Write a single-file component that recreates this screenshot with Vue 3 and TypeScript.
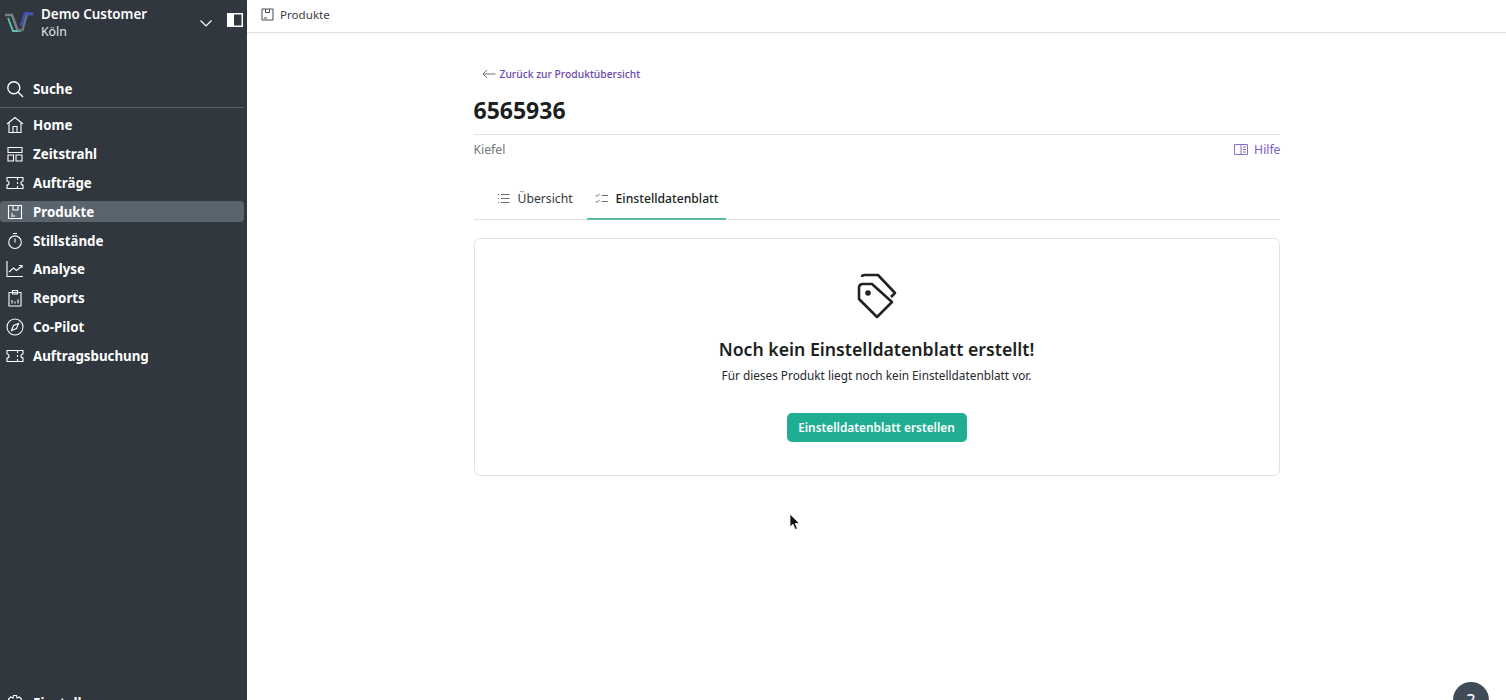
<template>
  <div class="app">
    <aside class="sidebar">
      <div class="brand">
        <svg class="logo" width="30" height="24" viewBox="0 0 30 24" fill="none" stroke-width="2.4">
          <path d="M1 4H8L13.5 19" stroke="#7b8287" />
          <path d="M4 7L9 20H17" stroke="#5fc4b4" stroke-width="1.8" />
          <path d="M13.5 19H18.5L23 3H29" stroke="#6b7278" />
          <path d="M17 15L21 2.5H29.5" stroke="#3f51c4" />
        </svg>
        <div class="brand-text">
          <div class="customer">Demo Customer</div>
          <div class="site">Köln</div>
        </div>
        <svg class="chevron" width="14" height="14" viewBox="0 0 14 14" fill="none" stroke="#fff" stroke-width="1.2">
          <path d="M1.5 4.5L7 10L12.5 4.5" />
        </svg>
        <svg class="panel" width="16" height="14" viewBox="0 0 16 14">
          <rect x="0.75" y="0.75" width="14.5" height="12.5" fill="none" stroke="#fff" stroke-width="1.5" />
          <rect x="1" y="1" width="6" height="12" fill="#fff" />
        </svg>
      </div>

      <div class="search nav-row">
        <svg width="18" height="18" viewBox="0 0 18 18" fill="none" stroke="#fff" stroke-width="1.4">
          <circle cx="7.8" cy="7.8" r="6" />
          <path d="M12.2 12.2L17 17" />
        </svg>
        <span>Suche</span>
      </div>

      <nav class="nav">
        <div
          v-for="item in navItems"
          :key="item.label"
          class="nav-row nav-item"
          :class="{ active: item.label === 'Produkte' }"
        >
          <svg width="18" height="18" viewBox="0 0 18 18" fill="none" stroke="#fff" stroke-width="1.1">
            <path v-for="d in item.paths" :key="d" :d="d" />
          </svg>
          <span>{{ item.label }}</span>
        </div>
      </nav>

      <div class="nav-row settings">
        <svg width="18" height="18" viewBox="0 0 18 18" fill="none" stroke="#fff" stroke-width="1.1">
          <path d="M7.5 1.5H10.5L11 4L13.4 3L15.5 5.2L14.3 7.3L16.5 8V11L14.3 11.7L15.5 13.8L13.4 16L11 15L10.5 17H7.5L7 15L4.6 16L2.5 13.8L3.7 11.7L1.5 11V8L3.7 7.3L2.5 5.2L4.6 3L7 4Z" />
        </svg>
        <span>Einstellungen</span>
      </div>
    </aside>

    <main class="main">
      <header class="topbar">
        <svg width="13" height="13" viewBox="0 0 13 13" fill="none" stroke="#444b52" stroke-width="1">
          <path d="M1 1H12V12H1Z M4.5 1V4.5H8.5V1 M3 10H6" />
        </svg>
        <span>Produkte</span>
      </header>

      <div class="content">
        <a class="back">
          <svg width="14" height="10" viewBox="0 0 14 10" fill="none" stroke="#6b7278" stroke-width="1">
            <path d="M13.5 5H1M5 1L1 5L5 9" />
          </svg>
          Zurück zur Produktübersicht
        </a>
        <h1 class="title">6565936</h1>
        <div class="meta">
          <span class="maker">Kiefel</span>
          <a class="help">
            <svg width="14" height="11" viewBox="0 0 14 11" fill="none" stroke="#8b6fd0" stroke-width="1">
              <path d="M0.5 0.5H13.5V10.5H0.5Z M7 0.5V10.5 M9 3H12 M9 5.5H12 M9 8H12" />
            </svg>
            Hilfe
          </a>
        </div>

        <div class="tabs">
          <div v-for="tab in tabs" :key="tab.label" class="tab" :class="{ selected: tab.selected }">
            <svg width="13" height="11" viewBox="0 0 13 11" fill="none" stroke="#6b7278" stroke-width="1">
              <path v-for="d in tab.paths" :key="d" :d="d" />
            </svg>
            {{ tab.label }}
          </div>
        </div>

        <section class="card">
          <svg class="tag" width="40" height="46" viewBox="0 0 40 46" fill="none" stroke="#1f2326" stroke-width="2.6" stroke-linejoin="round">
            <path d="M2 15Q2 11 6 11H15L35 29L20 44L2 26Z" />
            <path d="M5 4Q5 2 8 2H21L38 20L34 24" />
            <circle cx="11" cy="20" r="2.8" fill="#1f2326" stroke="none" />
          </svg>
          <h2>Noch kein Einstelldatenblatt erstellt!</h2>
          <p>Für dieses Produkt liegt noch kein Einstelldatenblatt vor.</p>
          <button class="create">Einstelldatenblatt erstellen</button>
        </section>
      </div>

      <svg class="cursor" width="12" height="18" viewBox="0 0 12 18">
        <path d="M1 1V14L4 11.2L6.2 16.5L8.4 15.5L6.2 10.5H10.5Z" fill="#111" stroke="#fff" stroke-width="0.8" />
      </svg>
      <div class="help-bubble">?</div>
    </main>
  </div>
</template>

<script setup lang="ts">
interface NavItem {
  label: string
  paths: string[]
}

const ticket = [
  'M1 3.5H17V7A2 2 0 0 0 17 11V14.5H1V11A2 2 0 0 0 1 7Z',
  'M11.5 4V6 M11.5 8V10 M11.5 12V14',
]

const navItems: NavItem[] = [
  { label: 'Home', paths: ['M1 8L9 1.5L17 8', 'M3 6.5V16.5H15V6.5', 'M7 16.5V10.5H11V16.5'] },
  { label: 'Zeitstrahl', paths: ['M2 2.5H16V7.5H2Z', 'M2 10H7.5V16H2Z', 'M10 10H16V16H10Z'] },
  { label: 'Aufträge', paths: ticket },
  { label: 'Produkte', paths: ['M2.5 2.5H15.5V15.5H2.5Z', 'M7 2.5V7H12V2.5', 'M5 13H9', 'M5 11H7'] },
  { label: 'Stillstände', paths: ['M9 16.5A6.3 6.3 0 1 0 9 3.9A6.3 6.3 0 0 0 9 16.5Z', 'M9 6.5V10.5', 'M7 1.5H11'] },
  { label: 'Analyse', paths: ['M1 1V16.5H17', 'M3 12L7.5 8L10.5 10.5L16 6', 'M13 5.5H16V8'] },
  { label: 'Reports', paths: ['M3 3.5H15V17H3Z', 'M6.5 1.5H11.5V5H6.5Z', 'M6 14.5V11', 'M9 14.5V12.5', 'M12 14.5V10.5'] },
  { label: 'Co-Pilot', paths: ['M9 17A8 8 0 1 0 9 1A8 8 0 0 0 9 17Z', 'M12.5 5.5L10.5 10.5L5.5 12.5L7.5 7.5Z'] },
  { label: 'Auftragsbuchung', paths: ticket },
]

const tabs = [
  {
    label: 'Übersicht',
    selected: false,
    paths: ['M4 1.5H12.5', 'M4 5.5H12.5', 'M4 9.5H12.5', 'M1 1.5H2.2', 'M1 5.5H2.2', 'M1 9.5H2.2'],
  },
  {
    label: 'Einstelldatenblatt',
    selected: true,
    paths: ['M0.5 2L2 3.5L4.5 0.8', 'M0.5 8L2 9.5L4.5 6.8', 'M6.5 2.5H13', 'M6.5 8.5H13'],
  },
]
</script>

<style>
html,
body {
  margin: 0;
  height: 100%;
  overflow: hidden;
}
</style>

<style scoped>
.app {
  display: flex;
  height: 100vh;
  overflow: hidden;
  font-family: 'Noto Sans', 'Open Sans', sans-serif;
  color: #1f2326;
  background: #fff;
}

/* sidebar */
.sidebar {
  width: 247px;
  flex-shrink: 0;
  display: flex;
  flex-direction: column;
  background: #30373e;
  color: #fff;
  overflow: hidden;
}

.brand {
  display: flex;
  align-items: center;
  height: 36px;
  padding: 5px 0 0 5px;
  margin-bottom: -1px;
  box-sizing: content-box;
}

.logo {
  margin-left: -1px;
  margin-right: 7px;
  flex-shrink: 0;
}

.brand-text {
  flex: 1;
  min-width: 0;
}

.customer {
  font-size: 13.4px;
  line-height: 18px;
  font-weight: 600;
}

.site {
  font-size: 12.3px;
  line-height: 18px;
  color: #e6e8ea;
}

.chevron {
  margin: 0 14px 0 0;
}

.panel {
  margin-right: 4px;
  margin-top: -6px;
}

.nav-row {
  display: flex;
  align-items: center;
  gap: 9px;
  padding-left: 6px;
  font-size: 13.3px;
  font-weight: 700;
}

.search {
  height: 27px;
  margin-top: 35px;
  margin-right: 3px;
  padding-bottom: 5px;
  border-bottom: 1px solid #596067;
}

.nav {
  display: flex;
  flex-direction: column;
  margin-top: 3px;
}

.nav-item {
  height: 28.8px;
  margin-right: 3px;
}

.nav-item.active {
  position: relative;
  z-index: 0;
}

.nav-item.active::before {
  content: '';
  position: absolute;
  z-index: -1;
  inset: 4px 0;
  background: #5a646d;
  border-radius: 4px;
}

.settings {
  margin-top: auto;
  flex-shrink: 0;
  height: 18px;
  margin-bottom: -12px;
}

/* main */
.main {
  position: relative;
  flex: 1;
  min-width: 0;
}

.topbar {
  display: flex;
  align-items: center;
  gap: 6px;
  box-sizing: border-box;
  height: 33px;
  padding: 0 0 3px 14px;
  border-bottom: 1px solid #dfe1e3;
  font-size: 11.6px;
  color: #3c4248;
  box-shadow: 0 1px 1px rgba(0, 0, 0, 0.03);
}

.content {
  width: 806px;
  margin: 0 auto;
  padding-top: 33px;
}

.back {
  display: flex;
  align-items: center;
  gap: 4px;
  height: 16px;
  padding-left: 8px;
  font-size: 10.3px;
  font-weight: 500;
  color: #6a46b0;
}

.title {
  margin: 8px 0 0;
  height: 44px;
  line-height: 40px;
  font-size: 23px;
  font-weight: 700;
  color: #1c1f22;
  border-bottom: 1px solid #e3e6e8;
}

.meta {
  display: flex;
  justify-content: space-between;
  align-items: center;
  height: 29px;
  font-size: 12.2px;
}

.maker {
  color: #6f767c;
}

.help {
  display: flex;
  align-items: center;
  gap: 6px;
  margin-right: -1px;
  color: #7a5cc4;
}

.tabs {
  display: flex;
  height: 40px;
  margin-top: 15px;
  border-bottom: 1px solid #dfe2e4;
}

.tab {
  display: flex;
  align-items: center;
  gap: 8px;
  padding: 0 8px 2px;
  margin-left: 15px;
  font-size: 12.2px;
  color: #343a40;
  box-sizing: border-box;
  height: 41px;
}

.tab.selected {
  margin-left: 6px;
  padding-bottom: 0;
  font-weight: 500;
  color: #1c1f22;
  border-bottom: 2px solid #5db8a5;
}

.card {
  display: flex;
  flex-direction: column;
  align-items: center;
  box-sizing: border-box;
  height: 238px;
  margin-top: 18px;
  padding-top: 34px;
  border: 1px solid #e1e3e5;
  border-radius: 6px;
}

.tag {
  display: block;
}

.card h2 {
  margin: 18px 0 0;
  font-size: 17.7px;
  line-height: 24px;
  font-weight: 600;
  color: #1c1f22;
}

.card p {
  margin: 5px 0 0;
  font-size: 11.8px;
  line-height: 18px;
  color: #24292d;
}

.create {
  margin-top: 29px;
  width: 180px;
  height: 29px;
  padding: 0 0 1px;
  border: none;
  border-radius: 5px;
  background: #1fae92;
  color: #fff;
  font-family: inherit;
  font-size: 11.85px;
  font-weight: 600;
}

.cursor {
  position: absolute;
  left: 542px;
  top: 513px;
}

.help-bubble {
  position: absolute;
  left: 1206px;
  top: 682px;
  width: 36px;
  height: 36px;
  border-radius: 50%;
  background: #3f4b57;
  color: #fff;
  font-size: 18px;
  line-height: 36px;
  text-align: center;
}
</style>
